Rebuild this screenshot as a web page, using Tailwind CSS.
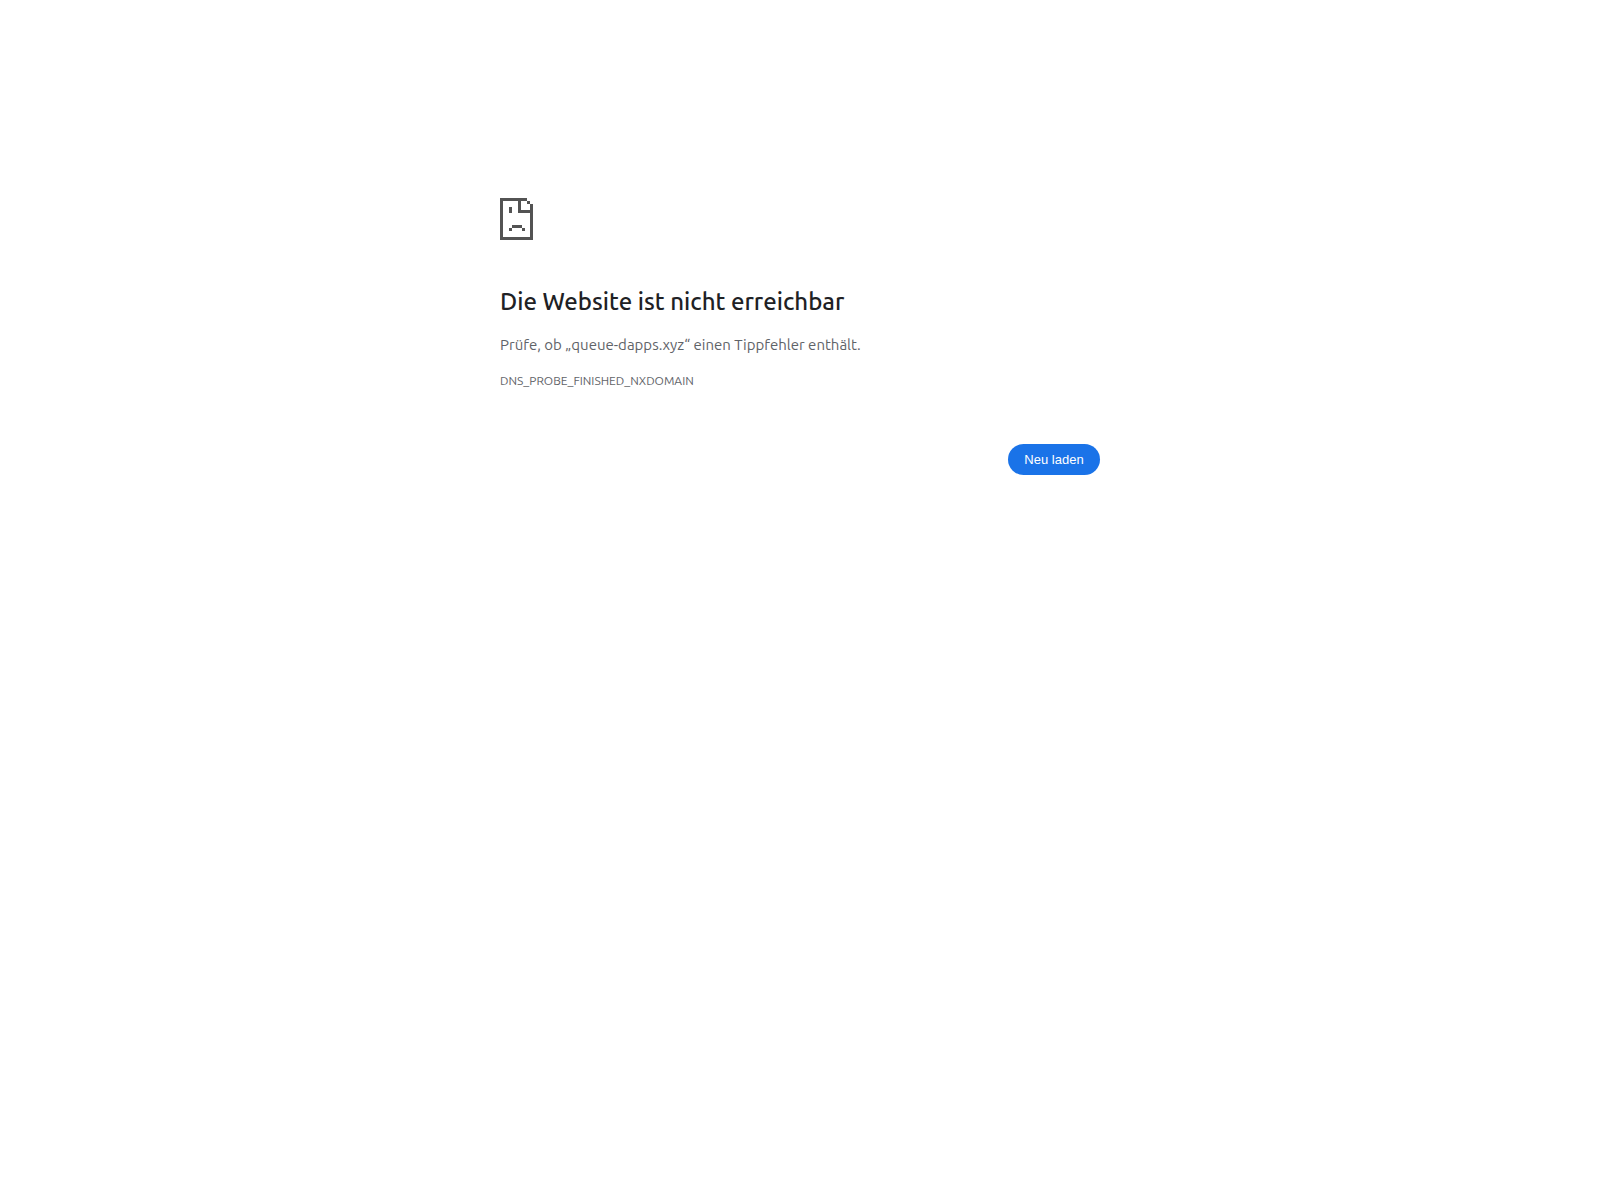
<!DOCTYPE html>
<html lang="de">
<head>
<meta charset="utf-8">
<meta name="viewport" content="width=device-width, initial-scale=1">
<title>queue-dapps.xyz</title>
<script src="https://cdn.jsdelivr.net/npm/@tailwindcss/browser@4"></script>
</head>
<body class="bg-white font-['Ubuntu','Noto_Sans',sans-serif] text-[#5f6368]">
<main class="mx-auto w-full max-w-[600px] pt-[198px]">
  <svg class="block h-[42px] w-[33px]" viewBox="0 0 33 42" fill="#535353" shape-rendering="crispEdges" aria-hidden="true">
    <path d="M0 0h27v3h3v3h3v36H0zM3 3v36h27V15H18V3zM21 3v9h9V6h-3V3z" fill-rule="evenodd"/>
    <path d="M9 9h3v6H9zM12 27h10v3H12zM9 30h3v3H9zM22 30h3v3h-3z"/>
  </svg>
  <h1 class="mt-[47px] text-[24px] leading-[30px] font-medium text-[#202124]">Die Website ist nicht erreichbar</h1>
  <p class="mt-4 text-[15px] leading-6">Prüfe, ob „queue-dapps.xyz“ einen Tippfehler enthält.</p>
  <p class="mt-4 text-[12px] leading-4">DNS_PROBE_FINISHED_NXDOMAIN</p>
  <div class="mt-[55px] flex justify-end">
    <button type="button" class="min-w-[92px] rounded-full bg-[#1a73e8] px-4 py-2 font-['Liberation_Sans',sans-serif] text-[13px] leading-[15px] text-white">Neu laden</button>
  </div>
</main>
</body>
</html>
